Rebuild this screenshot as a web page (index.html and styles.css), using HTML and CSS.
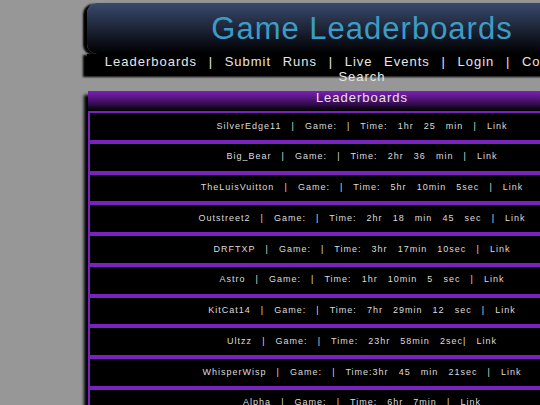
FILE: index.html
```html
<!doctype html>
<html lang="en">
<head>
<meta charset="utf-8">
<meta name="viewport" content="width=device-width, initial-scale=1">
<title>Game Leaderboards</title>
<link rel="stylesheet" href="styles.css">
</head>
<body>

	<div class="page">

		<div class="masthead">
			<h1>Game Leaderboards</h1>
			<div class="nav">
				<a href="#">Leaderboards</a> | <a href="#">Submit Runs</a> | <a href="#">Live Events</a> | <a href="#">Login</a> | <a href="#">Contact Us</a> | <a href="#">Search</a>
			</div>
		</div>

		<div class="board">
			<div class="boardTitle">Leaderboards</div>

			<div class="run">SilverEdge11 | Game: | Time: 1hr 25 min | <a href="#">Link</a></div>
			<div class="run">Big_Bear | Game: | Time: 2hr 36 min | <a href="#">Link</a></div>
			<div class="run">TheLuisVuitton | Game: | Time: 5hr 10min 5sec | <a href="#">Link</a></div>
			<div class="run">Outstreet2 | Game: | Time: 2hr 18 min 45 sec | <a href="#">Link</a></div>
			<div class="run">DRFTXP | Game: | Time: 3hr 17min 10sec | <a href="#">Link</a></div>
			<div class="run">Astro | Game: | Time: 1hr 10min 5 sec | <a href="#">Link</a></div>
			<div class="run">KitCat14 | Game: | Time: 7hr 29min 12 sec | <a href="#">Link</a></div>
			<div class="run">Ultzz | Game: | Time: 23hr 58min 2sec| <a href="#">Link</a></div>
			<div class="run">WhisperWisp | Game: | Time:3hr 45 min 21sec | <a href="#">Link</a></div>
			<div class="run">Alpha | Game: | Time: 6hr 7min | <a href="#">Link</a></div>
		</div>

	</div>

</body>
</html>
```

FILE: styles.css
```css
body { background: #979797; font-family: "Liberation Sans", Arial, sans-serif; margin: 0; overflow: hidden; }
a { color: inherit; text-decoration: none; }

.page { margin: 3px 0 0 87px; width: 550px; }

/* top banner: title block plus the link bar under it */
.masthead h1 { background: linear-gradient( #3a4a6c, #0b0e16 80%, #000 ); border-radius: 10px; box-shadow: -4px 1px 2px #000; color: #3c9cc5; font-size: 31px; font-weight: normal; letter-spacing: 1px; line-height: 35px; margin: 0; padding: 8px 0; text-align: center; }
.nav { background: #000; box-shadow: -4px 1px 2px #000; color: #e6e6e6; font-size: 13px; height: 22px; letter-spacing: 1px; line-height: 15px; text-align: center; word-spacing: 7px; }

/* leaderboard panel */
.board { background: #000; box-shadow: -4px 4px 3px #000; margin: 15px 0 0 1px; width: 548px; }
.boardTitle { background: linear-gradient( #7d1eb9, #3a0e58 60%, #000 ); color: #e4e4e4; font-size: 13px; letter-spacing: 1px; line-height: 13px; padding: 0 0 7px; text-align: center; }
.run { border: 2px solid #7a22bd; color: #dcdcdc; font-size: 9px; letter-spacing: 1px; line-height: 10.75px; padding: 7.5px 0 8.5px; text-align: center; word-spacing: 6.6px; }
```
